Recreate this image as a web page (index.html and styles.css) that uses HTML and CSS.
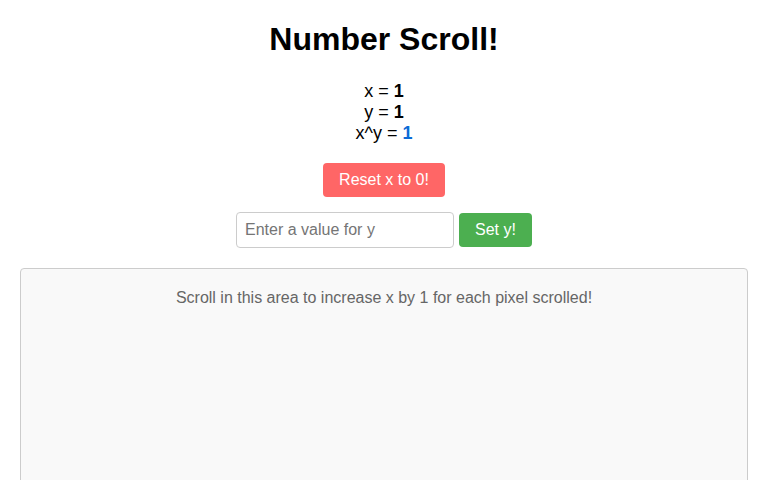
FILE: index.html
```html
<!DOCTYPE html>
<html>
<head>
<meta charset="utf-8">
<link rel="stylesheet" href="styles.css">
</head>
<body>
<main class="page">
  <h1 class="title">Number Scroll!</h1>
  <div class="values">
    <div class="line">x = <strong>1</strong></div>
    <div class="line">y = <strong>1</strong></div>
    <div class="line">x^y = <strong class="result">1</strong></div>
  </div>
  <div class="reset-row">
    <button class="btn btn-reset">Reset x to 0!</button>
  </div>
  <div class="set-row">
    <input class="y-input" type="text" placeholder="Enter a value for y">
    <button class="btn btn-set">Set y!</button>
  </div>
  <div class="scroll-area">
    <p class="hint">Scroll in this area to increase x by 1 for each pixel scrolled!</p>
  </div>
</main>
</body>
</html>
```
FILE: styles.css
```css
html, body {
  margin: 0;
  padding: 0;
  background: #ffffff;
}
body {
  font-family: "Liberation Sans", Arial, sans-serif;
  color: #000;
}
.page {
  display: flex;
  flex-direction: column;
  align-items: center;
  padding: 0 20px;
}
.title {
  font-size: 32px;
  font-weight: bold;
  margin: 21px 0 23px;
  line-height: 37px;
}
.values {
  font-size: 18px;
  line-height: 21px;
  text-align: center;
}
.result {
  color: #0b6bd6;
}
.reset-row {
  margin-top: 19px;
}
.btn {
  font-family: "Liberation Sans", Arial, sans-serif;
  font-size: 16px;
  line-height: 18px;
  padding: 8px 16px;
  border: none;
  border-radius: 4px;
  color: #fff;
  cursor: pointer;
}
.btn-reset {
  background: #ff6666;
}
.btn-set {
  background: #4caf50;
}
.set-row {
  margin-top: 15px;
  display: flex;
  align-items: center;
  gap: 5px;
}
.y-input {
  font-family: "Liberation Sans", Arial, sans-serif;
  font-size: 16px;
  line-height: 18px;
  width: 200px;
  padding: 8px;
  border: 1px solid #cccccc;
  border-radius: 4px;
  margin: 0;
  color: #000;
}
.y-input::placeholder {
  color: #757575;
}
.scroll-area {
  align-self: stretch;
  margin-top: 20px;
  height: 400px;
  background: #f9f9f9;
  border: 1px solid #cccccc;
  border-radius: 4px;
  padding: 20px;
  text-align: center;
}
.hint {
  margin: 0;
  font-size: 16px;
  line-height: 18px;
  color: #666666;
}
```
